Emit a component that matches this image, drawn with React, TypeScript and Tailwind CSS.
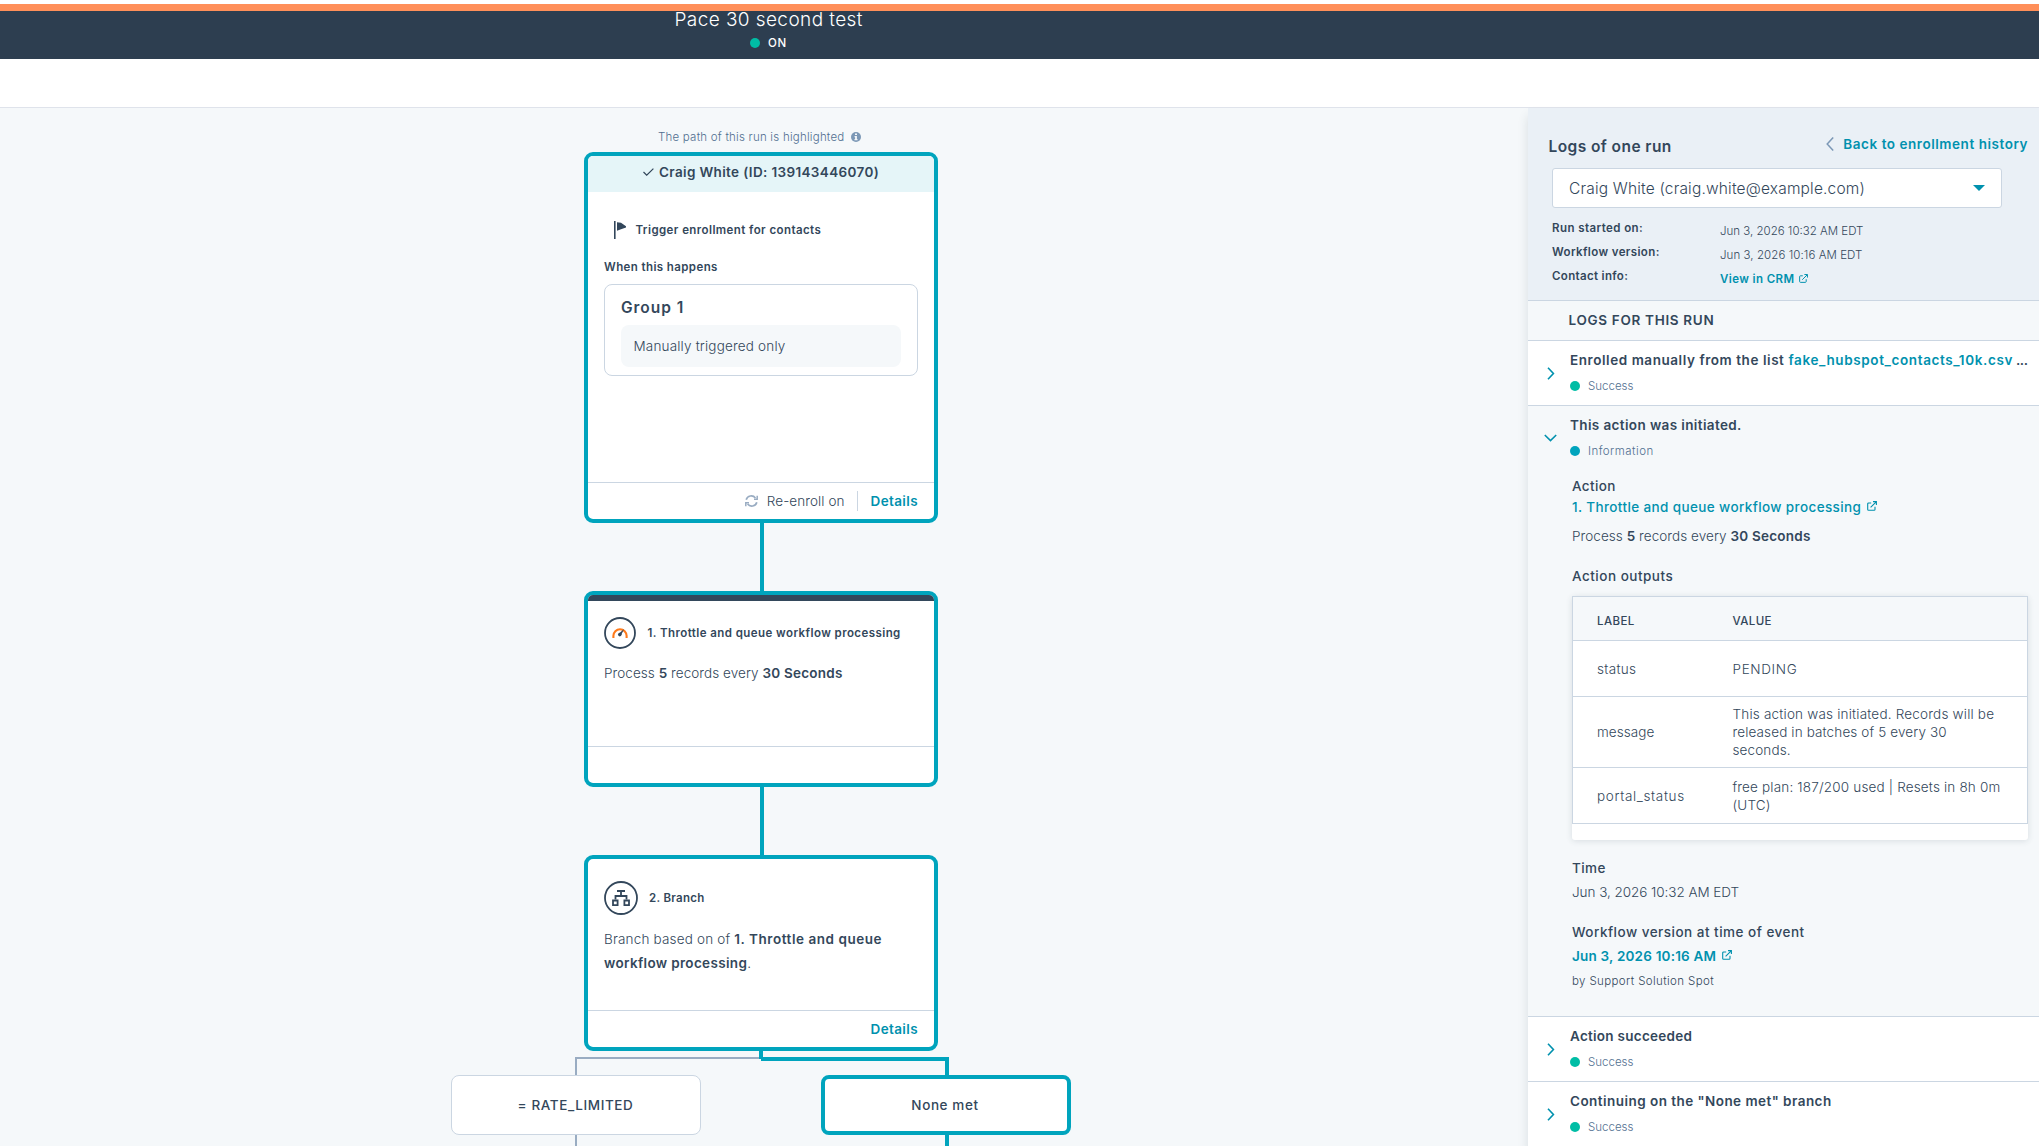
import type { ReactNode } from "react";
import clsx from "clsx";

type CardProps = {
  className?: string;
  children: ReactNode;
};

function Card({ className, children }: CardProps) {
  return (
    <div
      className={clsx(
        "ml-[584px] flex w-[354px] shrink-0 flex-col overflow-hidden rounded-[9px] border-4 border-[#00a4bd] bg-white",
        className,
      )}
    >
      {children}
    </div>
  );
}

function CardFooter({ children }: { children?: ReactNode }) {
  return (
    <div className="mt-auto flex h-[37px] items-center justify-end border-t border-[#cbd6e2] px-4">
      {children}
    </div>
  );
}

function Connector() {
  return <div className="ml-[760px] h-[68px] w-1 shrink-0 bg-[#00a4bd]" />;
}

function ExternalIcon({ className }: { className?: string }) {
  return (
    <svg viewBox="0 0 10 10" fill="none" stroke="#0091ae" strokeWidth="1.1" className={className}>
      <path d="M4.2 2H1.6a.9.9 0 0 0-.9.9v5.5c0 .5.4.9.9.9h5.5c.5 0 .9-.4.9-.9V5.8" />
      <path d="M3.6 6.4 9.2.8M6 .6h3.4V4" />
    </svg>
  );
}

function Chevron({ open }: { open?: boolean }) {
  return (
    <div className="flex h-full w-[42px] justify-center pl-[3px]">
      {open ? (
        <svg viewBox="0 0 13 8" className="mt-[28px] h-2 w-[13px]" fill="none" stroke="#0091ae" strokeWidth="1.6">
          <path d="M.8 1l5.7 5.6L12.2 1" />
        </svg>
      ) : (
        <svg viewBox="0 0 8 13" className="mt-[25.5px] h-[13px] w-2" fill="none" stroke="#0091ae" strokeWidth="1.6">
          <path d="M1 .8l5.4 5.7L1 12.2" />
        </svg>
      )}
    </div>
  );
}

type LogRowProps = {
  open?: boolean;
  title: ReactNode;
  status: ReactNode;
  className?: string;
};

function LogRow({ open, title, status, className }: LogRowProps) {
  return (
    <div className={clsx("flex h-[65px] shrink-0", className)}>
      <Chevron open={open} />
      <div className="pt-[9px]">
        <div className="h-5 text-[13.5px] font-semibold whitespace-nowrap">{title}</div>
        <div className="mt-[6px] flex h-5 items-center text-[11.5px] font-light text-[#516f90]">
          <span
            className={clsx("mr-2 size-[10px] rounded-full", open ? "bg-[#00a4bd]" : "bg-[#00bda5]")}
          />
          {status}
        </div>
      </div>
    </div>
  );
}

export default function App() {
  return (
    <div className="flex h-[1146px] w-[2039px] flex-col overflow-hidden bg-white font-['Inter',sans-serif] leading-5 whitespace-nowrap text-[#33475b]">
      <header className="shrink-0 pt-1">
        <div className="h-[7px] bg-[#ff8f59]" />
        <div className="h-12 bg-[#2d3e50] text-white">
          <div className="ml-[674.5px] h-[22px] text-[19px] leading-[18px] font-light tracking-[0.41px]">
            Pace 30 second test
          </div>
          <div className="ml-[750px] flex h-5 items-center text-[11.5px] font-medium">
            <span className="mr-2 size-[10px] rounded-full bg-[#00bda5]" />
            <span className="tracking-[0.7px]">ON</span>
          </div>
        </div>
        <div className="h-[49px] border-b border-[#dfe3eb]" />
      </header>

      <div className="flex min-h-0 flex-1">
        <main className="flex w-[1528px] flex-col overflow-hidden bg-[#f5f8fa]">
          <div className="ml-[658px] flex h-11 shrink-0 items-start pt-[19px] text-[11.5px] font-light text-[#516f90]">
            <span className="tracking-[0.22px]">The path of this run is highlighted</span>
            <svg viewBox="0 0 10 10" className="mt-[5px] ml-[7px] size-[10px]">
              <circle cx="5" cy="5" r="5" fill="#7c98b6" />
              <path d="M4 1.6h2v1.5H4zM3.6 4h2.3v3h.6v1.2h-3V7h.6V5.2h-.5z" fill="#f5f8fa" />
            </svg>
          </div>

          <Card className="h-[371px]">
            <div className="flex h-9 bg-[#e5f5f8] pt-[6px] pl-[55px] text-[13.5px] font-semibold">
              <svg viewBox="0 0 11 8" className="mt-[6px] mr-[5px] h-2 w-[11px]" fill="none" stroke="#33475b" strokeWidth="1.2">
                <path d="M.5 4l3.2 3.2L10.4.6" />
              </svg>
              <span className="tracking-[0.36px]">Craig White (ID: 139143446070)</span>
            </div>
            <div className="mt-7 flex pl-[26px] text-[11.5px] font-semibold">
              <svg viewBox="0 0 12 18" className="mt-[1px] mr-[9.5px] h-[18px] w-3 shrink-0" fill="#33475b">
                <path d="M0 0h1.6v18H0zM3 1.2l4 .6 5 3.4v1.2L7 8.2l-4 1.6z" />
              </svg>
              <span className="tracking-[0.42px]">Trigger enrollment for contacts</span>
            </div>
            <div className="mt-[17px] pl-4 text-[11.5px] font-semibold tracking-[0.4px]">When this happens</div>
            <div className="mx-4 mt-[7px] h-[92px] rounded-lg border border-[#cbd6e2] px-4 pt-[11px]">
              <div className="h-6 text-[15.5px] leading-6 font-semibold tracking-[0.95px]">Group 1</div>
              <div className="mt-[5px] h-[42px] rounded-lg bg-[#f5f8fa] pt-[11px] pl-[12.5px] text-[13.5px] font-light tracking-[0.18px]">
                Manually triggered only
              </div>
            </div>
            <CardFooter>
              <svg viewBox="0 0 13 12" className="mr-[9px] h-3 w-[13px]" fill="none" stroke="#99acc2" strokeWidth="1.7">
                <path d="M1.2 4.8A5.2 5.2 0 0 1 10.4 3M11.8 7.2A5.2 5.2 0 0 1 2.6 9" />
                <path d="M12.2.8v3.4H9M.8 11.2V7.8H4" strokeWidth="1.5" />
              </svg>
              <span className="text-[13.5px] font-light tracking-[0.08px]">Re-enroll on</span>
              <span className="mx-[12.5px] h-5 w-px bg-[#cbd6e2]" />
              <span className="text-[13.5px] font-semibold tracking-[0.38px] text-[#0091ae]">Details</span>
            </CardFooter>
          </Card>

          <Connector />

          <Card className="h-[196px]">
            <div className="h-[6px] shrink-0 bg-[#33475b]" />
            <div className="mt-4 flex items-center pl-4">
              <svg viewBox="0 0 32 32" className="size-8" fill="none">
                <circle cx="16" cy="16" r="15" stroke="#33475b" strokeWidth="1.8" />
                <path d="M9.4 21v-2.2a6.6 6.6 0 0 1 13.2 0V21" stroke="#ff7a1a" strokeWidth="2.1" />
                <path d="M14.8 16.6l5.4-4.6-3.2 6.2z" fill="#33475b" />
                <circle cx="15.8" cy="17.6" r="1.8" fill="#33475b" />
              </svg>
              <span className="ml-[11.5px] text-[11.5px] font-semibold tracking-[0.43px]">
                1. Throttle and queue workflow processing
              </span>
            </div>
            <div className="mt-3 pl-4 text-[13.5px] leading-6 font-light tracking-[0.06px]">
              Process <b className="font-semibold">5</b> records every{" "}
              <b className="font-semibold tracking-[0.22px]">30 Seconds</b>
            </div>
            <CardFooter />
          </Card>

          <Connector />

          <Card className="h-[196px]">
            <div className="mt-[22px] flex items-center pl-4">
              <svg viewBox="0 0 34 34" className="size-[34px]" fill="none" stroke="#33475b" strokeWidth="1.8">
                <circle cx="17" cy="17" r="16" />
                <path d="M13 10h8M17 10v5M11.5 18.5V15h11v3.5" />
                <path d="M9 19.5h4.6v4.6H9zM20.4 19.5H25v4.6h-4.6z" />
              </svg>
              <span className="ml-[11px] text-[11.5px] font-semibold tracking-[0.3px]">2. Branch</span>
            </div>
            <div className="mt-3 pl-4 text-[13.5px] leading-6 font-light tracking-[0.18px]">
              Branch based on of{" "}
              <b className="font-semibold tracking-[0.54px]">
                1. Throttle and queue
                <br />
                <span className="tracking-[0.34px]">workflow processing</span>
              </b>
              .
            </div>
            <CardFooter>
              <span className="text-[13.5px] font-semibold tracking-[0.38px] text-[#0091ae]">Details</span>
            </CardFooter>
          </Card>

          <svg viewBox="0 0 374 24" className="ml-[575px] h-6 w-[374px] shrink-0">
            <path d="M0 24V6h186v2H2v16z" fill="#99acc2" />
            <path d="M184 0h4v6h186v18h-4V10H186V8h-2z" fill="#00a4bd" />
          </svg>
          <div className="ml-[451px] flex h-[60px] shrink-0 gap-[120px] text-[13.5px] font-medium">
            <div className="flex w-[250px] items-center justify-center rounded-lg border border-[#cbd6e2] bg-white pr-[1px] tracking-[0.6px]">
              = RATE_LIMITED
            </div>
            <div className="flex w-[250px] items-center justify-center rounded-lg border-4 border-[#00a4bd] bg-white pr-[2px] tracking-[0.6px]">
              None met
            </div>
          </div>
          <div className="ml-[575px] flex h-[11px] shrink-0 gap-[368px]">
            <div className="w-[2px] bg-[#99acc2]" />
            <div className="w-1 bg-[#00a4bd]" />
          </div>
        </main>

        <aside className="flex w-[511px] flex-col bg-[#f5f8fa] shadow-[0_8px_10px_rgba(45,62,80,0.14)]">
          <div className="h-[193px] shrink-0 border-b border-[#cbd6e2] bg-[#eaf0f6] pt-[26px]">
            <div className="flex h-[34px] items-start justify-between pr-[11px] pl-[20.5px]">
              <h1 className="pt-[1px] text-[15.5px] leading-6 font-semibold tracking-[0.43px]">Logs of one run</h1>
              <a className="flex text-[13.5px] font-semibold text-[#0091ae]">
                <svg viewBox="0 0 8 14" className="mt-[3px] mr-[9px] h-[14px] w-2" fill="none" stroke="#7c98b6" strokeWidth="1.5">
                  <path d="M7.2.5L1.2 7l6 6.5" />
                </svg>
                <span className="tracking-[0.54px]">Back to enrollment history</span>
              </a>
            </div>
            <div className="ml-6 flex h-10 w-[450px] items-center justify-between rounded-[3px] border border-[#cbd6e2] bg-white px-4">
              <span className="pt-[1px] text-[15.5px] font-light tracking-[0.18px]">
                Craig White (craig.white@example.com)
              </span>
              <svg viewBox="0 0 12 6" className="h-[6px] w-3" fill="#0091ae">
                <path d="M0 0h12L6 6z" />
              </svg>
            </div>
            <div className="mt-[10px] grid auto-rows-[24px] grid-cols-[168px_auto] justify-start pl-6 text-[11.5px]">
              <span className="font-semibold tracking-[0.42px]">Run started on:</span>
              <span className="pt-[3px] font-light">Jun 3, 2026 10:32 AM EDT</span>
              <span className="font-semibold tracking-[0.38px]">Workflow version:</span>
              <span className="pt-[3px] font-light tracking-[0.07px]">Jun 3, 2026 10:16 AM EDT</span>
              <span className="font-semibold tracking-[0.34px]">Contact info:</span>
              <a className="flex pt-[3px] font-semibold text-[#0091ae]">
                <span className="tracking-[0.4px]">View in CRM</span>
                <ExternalIcon className="mt-[5px] ml-[5px] size-[9px]" />
              </a>
            </div>
          </div>

          <h2 className="h-10 shrink-0 border-b border-[#cbd6e2] pt-[9px] pl-[40.5px] text-[13.5px] font-semibold tracking-[0.68px]">
            LOGS FOR THIS RUN
          </h2>

          <LogRow
            className="border-b border-[#cbd6e2] bg-white"
            title={
              <>
                <span className="tracking-[0.56px]">Enrolled manually from the list </span>
                <a className="tracking-[0.62px] text-[#0091ae]">fake_hubspot_contacts_10k.csv</a>
                <span className="tracking-[-0.4px]"> ...</span>
              </>
            }
            status={<span>Success</span>}
          />
          <LogRow
            open
            title={<span className="tracking-[0.38px]">This action was initiated.</span>}
            status={<span className="tracking-[0.46px]">Information</span>}
          />

          <div className="h-[546px] shrink-0 border-b border-[#cbd6e2] pt-[5px] pr-[11px] pl-11 text-[13.5px] font-medium">
            <div className="tracking-[0.36px]">Action</div>
            <a className="mt-[1px] flex text-[#0091ae]">
              <span className="tracking-[0.38px]">1. Throttle and queue workflow processing</span>
              <ExternalIcon className="mt-1 ml-[6px] size-[10px]" />
            </a>
            <div className="mt-[9px] font-light tracking-[0.06px]">
              Process <b className="font-semibold">5</b> records every{" "}
              <b className="font-semibold tracking-[0.22px]">30 Seconds</b>
            </div>
            <div className="mt-5 tracking-[0.5px]">Action outputs</div>

            <div className="mt-[10px] h-[244px] rounded-[3px] bg-white shadow-[0_1px_6px_rgba(45,62,80,0.14)]">
              <div className="grid grid-cols-[159.5px_1fr] grid-rows-[44px_56px_71px_56px] border border-b-0 border-[#cbd6e2] text-[13.5px] leading-[18px] font-light">
                <div className="border-b border-[#cbd6e2] bg-[#f5f8fa] pt-[15px] pl-6 text-[11.5px] font-medium tracking-[0.4px]">
                  LABEL
                </div>
                <div className="border-b border-[#cbd6e2] bg-[#f5f8fa] pt-[15px] text-[11.5px] font-medium tracking-[0.4px]">
                  VALUE
                </div>
                <div className="flex items-center border-b border-[#cbd6e2] pl-6 tracking-[0.3px]">status</div>
                <div className="flex items-center border-b border-[#cbd6e2] tracking-[0.65px]">PENDING</div>
                <div className="flex items-center border-b border-[#cbd6e2] pl-6 tracking-[0.05px]">message</div>
                <div className="flex items-center border-b border-[#cbd6e2]">
                  <p>
                    <span className="tracking-[0.2px]">This action was initiated. Records will be</span>
                    <br />
                    <span className="tracking-[0.13px]">released in batches of 5 every 30</span>
                    <br />
                    <span className="tracking-[0.13px]">seconds.</span>
                  </p>
                </div>
                <div className="flex items-center border-b border-[#cbd6e2] pl-6 tracking-[0.65px]">portal_status</div>
                <div className="flex items-center border-b border-[#cbd6e2] tracking-[0.17px]">
                  free plan: 187/200 used | Resets in 8h 0m
                  <br />
                  (UTC)
                </div>
              </div>
            </div>

            <div className="mt-[18px] tracking-[0.4px]">Time</div>
            <div className="mt-1 font-light tracking-[-0.05px]">Jun 3, 2026 10:32 AM EDT</div>
            <div className="mt-5 tracking-[0.49px]">Workflow version at time of event</div>
            <a className="mt-1 flex font-semibold text-[#0091ae]">
              <span className="tracking-[0.2px]">Jun 3, 2026 10:16 AM</span>
              <ExternalIcon className="mt-1 ml-[6px] size-[10px]" />
            </a>
            <div className="mt-[5px] text-[11.5px] font-light tracking-[0.38px]">by Support Solution Spot</div>
          </div>

          <LogRow
            className="border-b border-[#cbd6e2] bg-white"
            title={<span className="tracking-[0.27px]">Action succeeded</span>}
            status={<span>Success</span>}
          />
          <LogRow
            className="bg-white"
            title={<span className="tracking-[0.46px]">Continuing on the "None met" branch</span>}
            status={<span>Success</span>}
          />
        </aside>
      </div>
    </div>
  );
}
